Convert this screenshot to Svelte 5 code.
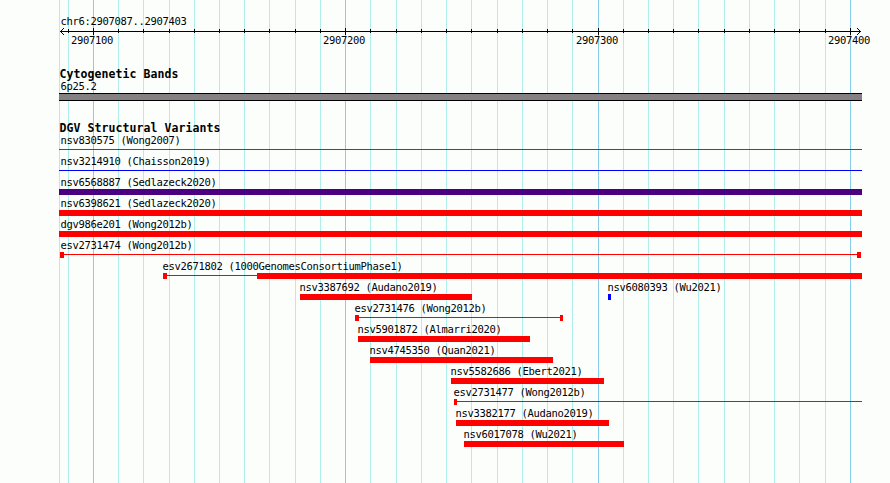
<script>
  const gridLines = [59, 68, 93, 118, 143, 169, 194, 219, 244, 269, 295, 320, 345, 370, 396, 421, 446, 471, 497, 522, 547, 572, 598, 623, 648, 673, 698, 724, 749, 774, 799, 825, 850];
  const major = [93, 345, 598, 850];
  const scale = [
    { x: 71, text: '2907100' },
    { x: 323, text: '2907200' },
    { x: 576, text: '2907300' },
    { x: 828, text: '2907400' }
  ];
  const red = '#ff0000';
  const blue = '#0000ff';
  // line and boxes are [start, end] pixel ranges
  const variants = [
    { name: 'nsv830575 (Wong2007)', x: 60, color: '#e60a14', line: [59, 862] },
    { name: 'nsv3214910 (Chaisson2019)', x: 60, color: blue, line: [59, 862] },
    { name: 'nsv6568887 (Sedlazeck2020)', x: 60, color: '#4b0082', boxes: [[59, 862]] },
    { name: 'nsv6398621 (Sedlazeck2020)', x: 60, color: red, boxes: [[59, 862]] },
    { name: 'dgv986e201 (Wong2012b)', x: 60, color: red, boxes: [[59, 862]] },
    { name: 'esv2731474 (Wong2012b)', x: 60, color: red, line: [60, 861], boxes: [[60, 64], [857, 861]] },
    { name: 'esv2671802 (1000GenomesConsortiumPhase1)', x: 162, color: red, line: [163, 862], boxes: [[163, 167], [257, 862]] },
    { name: 'nsv3387692 (Audano2019)', x: 299, color: red, boxes: [[300, 472]], extra: { name: 'nsv6080393 (Wu2021)', x: 607, color: blue, box: [608, 611] } },
    { name: 'esv2731476 (Wong2012b)', x: 354, color: red, line: [355, 563], boxes: [[355, 359], [560, 563]] },
    { name: 'nsv5901872 (Almarri2020)', x: 357, color: red, boxes: [[358, 530]] },
    { name: 'nsv4745350 (Quan2021)', x: 369, color: red, boxes: [[370, 553]] },
    { name: 'nsv5582686 (Ebert2021)', x: 450, color: red, boxes: [[451, 604]] },
    { name: 'esv2731477 (Wong2012b)', x: 453, color: red, line: [454, 862], boxes: [[454, 457]] },
    { name: 'nsv3382177 (Audano2019)', x: 455, color: red, boxes: [[456, 609]] },
    { name: 'nsv6017078 (Wu2021)', x: 463, color: red, boxes: [[464, 624]] }
  ];
</script>

<main class="browser">
  <svg class="grid" width="890" height="483" shape-rendering="crispEdges" aria-hidden="true">
    {#each gridLines as x}
      <rect {x} y="0" width="1" height="483" fill={major.includes(x) ? '#87ceeb' : '#afeeea'} />
    {/each}
  </svg>

  <header class="ruler">
    <svg width="890" height="48" shape-rendering="crispEdges">
      <text x="60.5" y="25">chr6:2907087..2907403</text>
      <rect x="60" y="31" width="801" height="1" />
      {#each gridLines.slice(1) as x}
        {#if major.includes(x)}
          <rect {x} y="28" width="1" height="7" />
        {:else}
          <rect {x} y="29" width="1" height="4" />
        {/if}
      {/each}
      <path d="M61 30h1v1h-1zM62 29h1v1h-1zM63 28h1v1h-1zM61 32h1v1h-1zM62 33h1v1h-1zM63 34h1v1h-1z" />
      <path d="M859 30h1v1h-1zM858 29h1v1h-1zM857 28h1v1h-1zM859 32h1v1h-1zM858 33h1v1h-1zM857 34h1v1h-1z" />
      {#each scale as s}
        <text x={s.x} y="44">{s.text}</text>
      {/each}
    </svg>
  </header>

  <section class="bands">
    <h2>Cytogenetic Bands</h2>
    <div class="band-name">6p25.2</div>
    <div class="band"></div>
  </section>

  <section class="variants">
    <h2>DGV Structural Variants</h2>
    {#each variants as v}
      <svg class="track" width="890" height="21" shape-rendering="crispEdges">
        <text x={v.x + 0.5} y="10">{v.name}</text>
        {#if v.line}
          <rect x={v.line[0]} y="15" width={v.line[1] - v.line[0]} height="1" fill={v.color} />
        {/if}
        {#each v.boxes ?? [] as b}
          <rect x={b[0]} y="13" width={b[1] - b[0]} height="6" fill={v.color} />
        {/each}
        {#if v.extra}
          <text x={v.extra.x + 0.5} y="10">{v.extra.name}</text>
          <rect x={v.extra.box[0]} y="13" width={v.extra.box[1] - v.extra.box[0]} height="6" fill={v.extra.color} />
        {/if}
      </svg>
    {/each}
  </section>
</main>

<style>
  .browser {
    position: relative;
    width: 890px;
    height: 483px;
    overflow: hidden;
    background: #fcfefc;
    color: #000;
    font: 10.5px/12px "DejaVu Sans Mono", "Liberation Mono", monospace;
    letter-spacing: -0.321px;
    font-variant-ligatures: none;
  }
  .grid {
    position: absolute;
    top: 0;
    left: 0;
  }
  .ruler, .bands, .variants {
    position: relative;
  }
  svg {
    display: block;
  }
  .bands {
    padding-top: 20px;
    height: 53px;
    box-sizing: border-box;
  }
  h2 {
    margin: 0 0 0 59.5px;
    font: bold 11.5px/13px "DejaVu Sans Mono", "Liberation Mono", monospace;
    letter-spacing: 0.077px;
    height: 12px;
  }
  .band-name {
    margin-left: 60.5px;
    height: 13px;
  }
  .band {
    margin-left: 59px;
    width: 803px;
    height: 8px;
    box-sizing: border-box;
    background: #848084;
    border: solid #000;
    border-width: 1px 0;
  }
  .variants {
    padding-top: 21px;
  }
</style>
